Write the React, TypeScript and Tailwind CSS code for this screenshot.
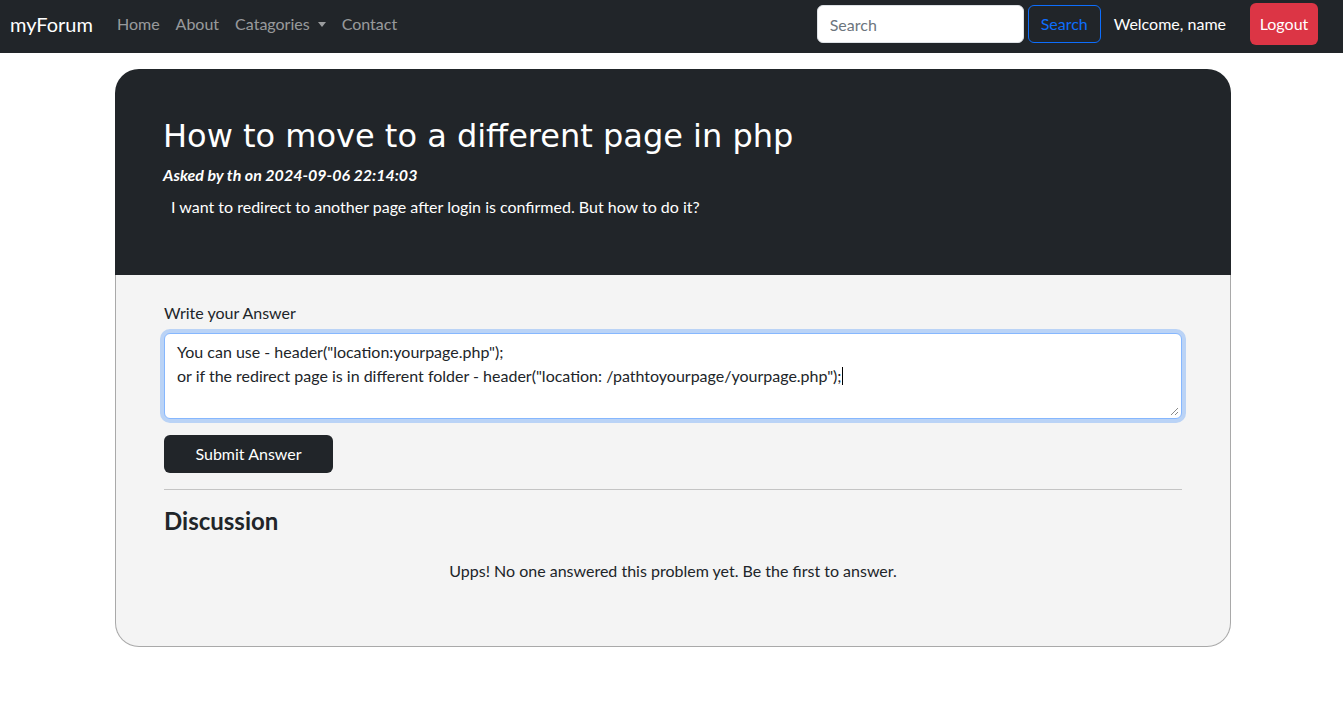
import React from "react";

const sans = "font-['Lato',sans-serif]";

export default function App() {
  return (
    <div className={`${sans} min-h-[718px] bg-white text-[#212529]`}>
      <nav className="flex h-[53px] items-center bg-[#212529] pb-[5px] pl-[10px] pr-[25px]">
        <span className="mr-[16px] text-[20px] text-white">myForum</span>
        <ul className="flex items-center text-[16px] text-[rgba(255,255,255,0.55)]">
          <li className="px-[8px]">Home</li>
          <li className="px-[8px]">About</li>
          <li className="flex items-center px-[8px]">
            Catagories
            <span className="ml-[8px] inline-block h-0 w-0 border-x-[4px] border-t-[5px] border-x-transparent border-t-[rgba(255,255,255,0.55)]" />
          </li>
          <li className="px-[8px]">Contact</li>
        </ul>
        <div className="ml-auto flex items-center">
          <input
            className="h-[38px] w-[207px] rounded-[6px] border border-[#dee2e6] bg-white px-[12px] text-[16px] text-[#212529] placeholder:text-[#6c757d] outline-none"
            placeholder="Search"
          />
          <button className="ml-[4px] h-[38px] w-[73px] rounded-[6px] border border-[#0d6efd] text-[16px] text-[#0d6efd]">
            Search
          </button>
          <span className="ml-[13px] text-[16px] text-white">Welcome, name</span>
          <button className="ml-[24px] h-[42px] w-[68px] rounded-[6px] bg-[#dc3545] text-[16px] text-white">
            Logout
          </button>
        </div>
      </nav>

      <div className="ml-[115px] mt-[16px] w-[1116px]">
        <div className="rounded-t-[24px] bg-[#212529] px-[48px] pb-[56px] pt-[48px] text-white">
          <h1 className="font-['DejaVu_Sans',sans-serif] text-[32px] leading-[38px]">
            How to move to a different page in php
          </h1>
          <p className="mt-[8px] text-[16px] font-bold italic leading-[24px]">
            Asked by th on 2024-09-06 22:14:03
          </p>
          <p className="mt-[8px] pl-[8px] text-[16px] leading-[24px]">
            I want to redirect to another page after login is confirmed. But how to do it?
          </p>
        </div>
        <div className="rounded-b-[24px] border border-t-0 border-[#a9a9a9] bg-[#f4f4f4] px-[48px] pb-[63px] pt-[26px]">
          <label className="block text-[16px] leading-[24px]">Write your Answer</label>
          <div className="relative mt-[8px] h-[86px] rounded-[6px] border border-[#86b7fe] bg-white px-[12px] py-[6px] text-[16px] leading-[24px] shadow-[0_0_0_4px_rgba(13,110,253,0.25)]">
            <div>You can use - header("location:yourpage.php");</div>
            <div>
              or if the redirect page is in different folder - header("location: /pathtoyourpage/yourpage.php");
              <span className="inline-block h-[18px] w-px translate-y-[3px] bg-black" />
            </div>
            <svg className="absolute bottom-[2px] right-[2px]" width="9" height="9" viewBox="0 0 9 9">
              <path d="M8 1 L1 8 M8 5 L5 8" stroke="#8a8a8a" strokeWidth="1" />
            </svg>
          </div>
          <button className="mt-[16px] h-[38px] w-[169px] rounded-[6px] bg-[#212529] text-[16px] text-white">
            Submit Answer
          </button>
          <hr className="mt-[16px] border-t border-[#c4c4c4]" />
          <h3 className="mt-[16px] text-[24px] font-bold leading-[29px]">Discussion</h3>
          <p className="mt-[24px] text-center text-[16px] leading-[24px]">
            Upps! No one answered this problem yet. Be the first to answer.
          </p>
        </div>
      </div>
    </div>
  );
}
